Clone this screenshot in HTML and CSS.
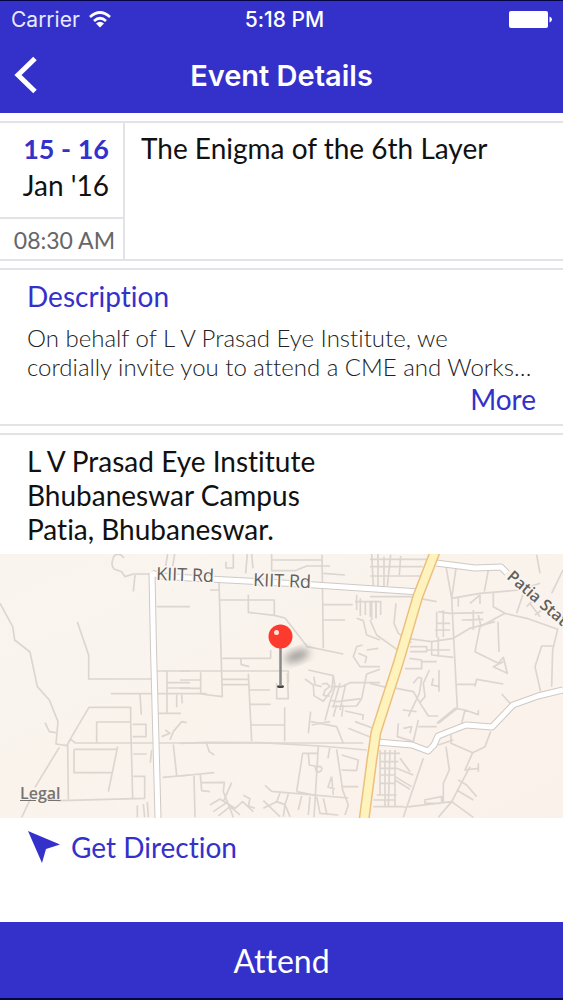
FILE: index.html
```html
<!DOCTYPE html>
<html lang="en">
<head>
<meta charset="utf-8">
<meta name="viewport" content="width=device-width, initial-scale=1">
<title>Event Details</title>
<link rel="stylesheet" href="styles.css">
</head>
<body>
<div class="app">
  <header class="header">
    <div class="status">
      <div class="carrier">
        <span>Carrier</span>
        <svg class="wifi" viewBox="0 0 22 17" aria-hidden="true">
          <path d="M1 6Q11-3 21 6M5 10Q11 4.500 17 10" fill="none" stroke="#fff" stroke-width="2.700"/>
          <path d="M7 12.500Q11 9 15 12.500L11 16.500Z" fill="#fff"/>
        </svg>
      </div>
      <span class="clock">5:18 PM</span>
      <svg class="battery" viewBox="0 0 43 17" aria-hidden="true">
        <rect width="39" height="17" rx="2" fill="#fff"/>
        <path d="M40.500 5.500Q43 6.500 43 8.500T40.500 11.500Z" fill="#fff"/>
      </svg>
    </div>
    <div class="navbar">
      <button class="back" type="button" aria-label="Back">
        <svg viewBox="0 0 24 38" aria-hidden="true"><path d="M21 2.500L4 19L21 35.500" fill="none" stroke="#fff" stroke-width="5"/></svg>
      </button>
      <h1 class="title">Event Details</h1>
    </div>
  </header>

  <main class="content">
    <section class="card summary">
      <div class="when">
        <div class="date"><strong>15 - 16</strong><span>Jan '16</span></div>
        <div class="time">08:30 AM</div>
      </div>
      <h2 class="event-name">The Enigma of the 6th Layer</h2>
    </section>

    <section class="card description">
      <h2 class="heading">Description</h2>
      <p class="copy">On behalf of L V Prasad Eye Institute, we cordially invite you to attend a CME and Works…</p>
      <a class="more" href="#">More</a>
    </section>

    <section class="card venue">
      <address class="address">L V Prasad Eye Institute<br>Bhubaneswar Campus<br>Patia, Bhubaneswar.</address>
      <div class="map">
        <svg class="map-art" viewBox="0 0 563 264" role="img" aria-label="Map of Patia, Bhubaneswar">
          <defs>
            <filter id="soft" x="-50%" y="-50%" width="200%" height="200%"><feGaussianBlur stdDeviation="4"/></filter>
            <linearGradient id="land" x1="0" y1="0" x2="1" y2="1"><stop offset="0" stop-color="#f9f5ee"/><stop offset="1" stop-color="#fbf1eb"/></linearGradient>
          </defs>
          <rect width="563" height="264" fill="url(#land)"/>
          <g class="lane">
            <g transform="translate(0 -4) scale(.3333)">
              <path d="M0 160L38 230L44 270L90 306L112 410L148 450L174 515L168 582L200 587L212 568L226 579H1090"/>
              <path d="M372 24Q358 5 342 18Q330 45 342 57L365 65L375 80L400 72H450M405 75L400 124"/>
              <path d="M232 216L266 315V387H455M333 431H620M420 433L424 494M135 518L148 545L168 548"/>
              <path d="M205 577L267 472H392V516H290V577M392 516L398 745M398 523H438V560H398M203 583L205 748M222 598H350M222 598V668H334M353 590L325 725M178 592L105 712M92 745L65 802M130 748L180 752L434 745V679H400M400 612H440M455 600L451 638M412 766V802M430 762L434 802M442 756L445 802"/>
              <path d="M470 170H570M468 363H570M501 363V490M475 490H543M501 398H570M501 414H570M530 433V472M545 433L547 460M485 560L510 550L496 540M510 570L520 545L545 515L560 518M520 583L530 676M488 682L570 675M503 12L497 48M524 12L518 50"/>
            </g>
            <g transform="translate(180 -4) scale(.3333)">
              <path d="M117 95L127 440L62 432M62 367V432M0 363H325V400M0 390H60M0 415H60M127 388H205M127 404H205M205 371L215 574M210 420H270M210 463H272M215 525H314M314 472V574M290 400V446H325L322 370"/>
              <path d="M120 150H283V196L205 187V134M283 196L315 204L382 290L490 312M127 325L272 325V300M182 325L184 344L208 350M90 120H118M426 14L430 295M430 164H518M430 210H495M275 12V62H345L380 48H450M275 30H425M430 70L495 75M215 12L219 55M202 12L197 70M160 12V54H138V35"/>
              <path d="M0 580L80 577L240 578L420 588L560 600M80 582L88 605L103 615M350 725L368 610H412M415 590L402 802M385 612L388 645L405 648L410 667Q432 664 423 650L405 648M350 725L402 735M450 590L444 625M470 598L488 720L505 765L495 795M485 615L535 630L530 662M485 660L530 662"/>
              <path d="M0 678L103 668M42 678L45 802M61 675L65 722L90 725M65 698L133 697L130 725L160 802M155 698L130 755M90 765L120 747L165 775L188 755L220 785M100 785L140 758M115 798L150 770L180 795M190 736L210 746L205 768L225 775M255 706L275 724L505 744M300 730L290 755L250 775M325 732L315 764L330 800M250 752L300 800M290 755L315 764L310 800M365 738L355 780M390 740L385 795M410 740L420 790L475 795M430 745L440 790M455 680L444 711L465 718M455 680L460 735M485 710H535"/>
              <path d="M385 360L460 377L455 420L430 454L402 437L400 405L375 387M402 380L405 405L425 410M425 402L440 400L450 410L435 420L430 436L450 438M460 377L465 410L450 455L435 512M455 410H485L510 398H600M460 470L480 400M480 480L497 402M450 450L470 455L545 446M545 446L560 372L600 358M545 446L530 468L455 470M470 465L460 500M490 465L485 500M392 485L385 550M392 515L470 530L490 580M395 525L450 515M495 483L550 495L548 510M525 515L580 535M505 535L580 565"/>
              <path d="M530 134V180M541 145V198M556 152V195M571 152V200M588 152V205M525 155H600M530 205L550 212L560 255L600 270M548 285L530 290L520 320L540 350L600 350M535 310L560 320L555 340M560 300L595 295"/>
            </g>
            <g transform="translate(370 -4) scale(.3333)">
              <path d="M0 28H170M0 50H158M0 78H155M5 12L10 108M24 12V108M42 20V110M62 14L52 108M92 18L88 75M0 140H120L200 155M5 152V210M18 152V205M32 152V195M78 160L72 220L85 250L125 278M0 210L20 255L90 305M110 265L185 275L250 265L300 235L375 215"/>
              <path d="M228 50L245 145L262 475L205 520M258 55L245 145L330 130L450 120L510 100M355 60L343 125M370 130V170L405 190L470 205L563 238L548 300L545 410M405 190L330 230L315 305L385 340M384 215L387 306M385 340L400 322L412 370L370 350L400 335M548 288H515L495 350L512 425"/>
              <path d="M205 185L240 190L340 188M275 210L340 208M310 180V240M325 195L332 225M265 170V140M300 160L330 135V162M200 185V262M220 180V262M200 220H240M195 240H240M170 300H240M185 275V315L250 322M205 260V320M120 290H170V305H120M118 325L155 330V356H105M155 335H200M260 403H315V408L320 388L400 402M178 360L160 400L165 440L148 460M190 385L185 405L210 410M207 360V425M130 400L145 382L155 385L148 430L115 500M80 415L130 425L160 475L175 498L205 498M98 480L140 485M0 400L40 410L80 415"/>
              <path d="M200 520L255 475L285 480L275 520M285 480L325 494L325 480M395 432L425 465M85 520L82 560L130 575M100 535L125 530L120 550M145 530H200M130 575L145 510M205 585L250 570M243 555V580L308 608L345 590L362 545M308 608L285 660L325 655M325 640V665M300 650L245 755M265 690L290 705L320 740M260 720L310 750M245 755L100 772M245 755L205 802M245 755L310 802M228 590L238 660L220 700V755M163 750L215 740V755M160 625L100 802M165 750V760H210"/>
              <path d="M30 600V735M30 610H90M30 635H85M30 655H80M30 675H75M30 700H75M20 735H80M10 750H75M10 770H100M45 600V770M60 600L55 770M75 600V770M90 625L120 665M80 655L130 675M75 680L125 710M75 690L120 718"/>
              <path d="M460 130L440 190M500 14L510 70M579 60L545 130M480 160L510 200M470 170L485 155M495 195L515 180"/>
            </g>
          </g>
          <path class="road-edge" d="M152 19L153.500 95L158 264M152 19L160 22L190 24L300 30L420 38M436 9L475 14L501 13L507 19M377 188L412 191L428 197L434 191L438 182L466 171L492 173L513 151L538 142L563 136"/>
          <path class="road" d="M152 19L153.500 95L158 264M152 19L160 22L190 24L300 30L420 38M436 9L475 14L501 13L507 19M377 188L412 191L428 197L434 191L438 182L466 171L492 173L513 151L538 142L563 136"/>
          <path class="highway-edge" d="M435 -2L418 42L398 110L376 178L372 205L364 266"/>
          <path class="highway" d="M435 -2L418 42L398 110L376 178L372 205L364 266"/>
          <g class="label">
            <text x="156" y="26" transform="rotate(2 156 26)">KIIT Rd</text>
            <text x="253" y="32" transform="rotate(2 253 32)">KIIT Rd</text>
            <text class="label-small" x="506" y="24" transform="rotate(41 506 24)">Patia Stat</text>
          </g>
          <ellipse cx="297" cy="102" rx="13" ry="5" transform="rotate(-20 297 102)" fill="#555" opacity=".6" filter="url(#soft)"/>
          <ellipse cx="280.500" cy="132.500" rx="3.500" ry="1.500" fill="#444"/>
          <path d="M280.500 92V132" stroke="#888" stroke-width="2.500"/>
          <circle cx="280.500" cy="82.500" r="12" fill="#fc3a2d"/>
          <circle cx="276.500" cy="78.500" r="2.500" fill="#ffe4dc"/>
        </svg>
        <a class="legal" href="#">Legal</a>
      </div>
      <a class="direction" href="#">
        <svg viewBox="0 0 32 32" aria-hidden="true"><path d="M0 0L32 13.500L18 18L14 32Z" fill="#3431cb"/></svg>
        <span>Get Direction</span>
      </a>
    </section>
  </main>

  <button class="attend" type="button">Attend</button>
</div>
</body>
</html>
```

FILE: styles.css
```css
* { box-sizing: border-box; }
body { margin: 0; background: #fff; color: #111; font-family: Lato, "Open Sans", sans-serif; font-variant-ligatures: none; }
h1, h2, p { margin: 0; font-weight: 400; }
a { color: #3431cb; text-decoration: none; }
button { border: 0; padding: 0; background: none; color: inherit; cursor: pointer; }
svg { display: block; }

.app { min-height: 100vh; display: flex; flex-direction: column; }

.header { background: #3431cb; color: #fff; border-top: 1px solid #070645; font-family: Inter, sans-serif; }
.status { display: grid; grid-template-columns: 1fr auto 1fr; align-items: center; height: 36px; padding: 0 11px; font-size: 21px; }
.carrier { display: flex; align-items: center; gap: 9px; color: #e9e9ff; }
.wifi { width: 22px; height: 17px; }
.clock { font-weight: 500; padding-left: 6px; }
.battery { width: 43px; height: 17px; justify-self: end; }
.navbar { display: grid; grid-template-columns: 48px 1fr 48px; align-items: center; height: 76px; }
.back { padding-left: 14px; }
.back svg { width: 24px; height: 38px; }
.title { font-size: 29px; font-weight: 600; text-align: center; }

.content { flex: 1; padding-top: 8px; display: flex; flex-direction: column; gap: 7px; }
.card { border: solid #e3e2e6; border-width: 2px 0; }

.summary { display: flex; }
.when { width: 125px; border-right: 2px solid #e3e2e6; display: flex; flex-direction: column; }
.date { display: flex; flex-direction: column; align-items: flex-end; height: 96px; padding: 7px 14px 0 0; font-size: 28px; line-height: 37px; border-bottom: 2px solid #e3e2e6; }
.date strong { color: #3431cb; font-size: 27px; font-weight: 700; }
.time { height: 40px; padding-right: 8px; text-align: right; font-size: 23px; line-height: 42px; color: #666; }
.event-name { flex: 1; padding: 7px 16px; font-size: 28px; line-height: 37px; }

.description { padding: 8px 27px 7px; display: flex; flex-direction: column; }
.heading { font-size: 28px; line-height: 36px; color: #3431cb; }
.copy { padding-top: 9px; font-size: 24px; font-weight: 300; line-height: 29px; color: #222; }
.more { align-self: flex-end; font-size: 28px; line-height: 36px; }

.venue { border-bottom: 0; }
.address { padding: 9px 27px 8px; font-style: normal; font-size: 28px; line-height: 34px; }
.map { position: relative; }
.map-art { width: 100%; height: auto; }
.lane { fill: none; stroke: #dcd5d0; stroke-width: 5; stroke-linejoin: round; }
.road-edge { fill: none; stroke: #cfc9c5; stroke-width: 7; stroke-linejoin: round; }
.road { fill: none; stroke: #fff; stroke-width: 5; stroke-linejoin: round; }
.highway-edge { fill: none; stroke: #ecc07c; stroke-width: 11; }
.highway { fill: none; stroke: #fff3bd; stroke-width: 8; }
.label { font: 500 18px "Open Sans", sans-serif; fill: #62605d; stroke: #faf5f0; stroke-width: 3px; paint-order: stroke; }
.label-small { font-size: 16px; font-weight: 600; }
.legal { position: absolute; left: 20px; bottom: 16px; font: 600 16px/18px "Open Sans", sans-serif; color: #77736f; text-decoration: underline; }
.direction { display: flex; align-items: center; gap: 11px; padding: 11px 28px; font-size: 28px; line-height: 36px; }
.direction svg { width: 32px; height: 32px; }

.attend { height: 78px; background: #3431cb; color: #fff; font-family: inherit; font-size: 32px; font-variant-ligatures: none; border-bottom: 2px solid #070645; }
```
